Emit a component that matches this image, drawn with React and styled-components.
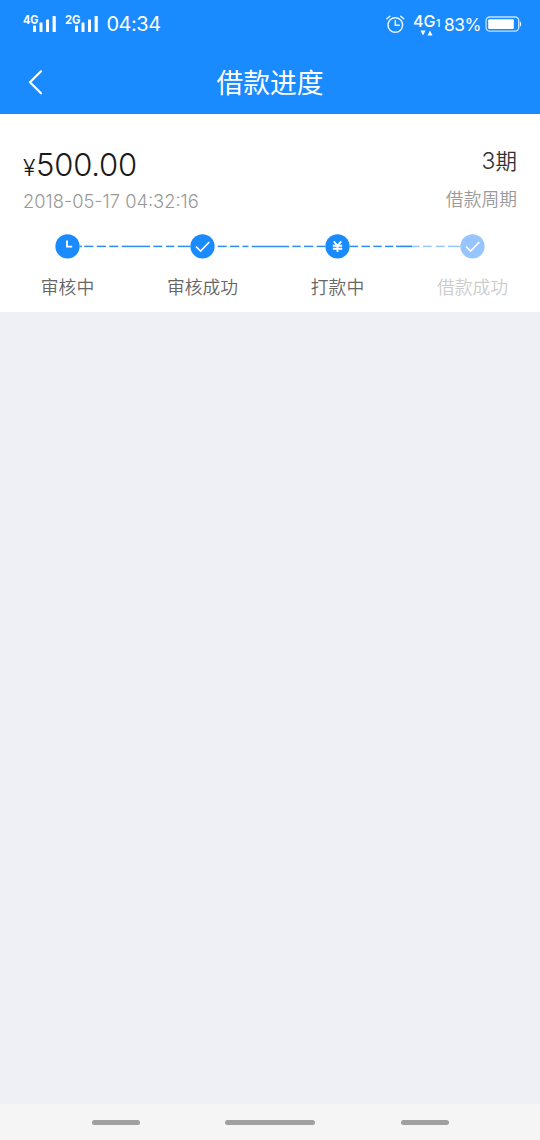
import styled, { createGlobalStyle } from "styled-components"

const GlobalStyle = createGlobalStyle`
* {
    box-sizing: border-box;
}

body {
    margin: 0;
    background-color: #eef0f5;
    font-family: Inter, "Noto Sans CJK SC", sans-serif;
}
`

const steps = [
    { label: "审核中", icon: "clock" },
    { label: "审核成功", icon: "check" },
    { label: "打款中", icon: "yen" },
    { label: "借款成功", icon: "check", pending: true },
]

// start and end of every dash between two steps
const lines = [
    [[0, 2.5], [4.8, 13.8], [17.2, 26.5], [29.8, 38.8], [42.2, 70.5], [73.8, 82.8], [86.5, 94.8], [98.2, 111]],
    [[3.2, 12.2], [15.5, 24.8], [28, 34], [37.2, 74.5], [77.8, 86.2], [89.5, 98.8], [102.2, 111]],
    [[0, 8.5], [12, 20.5], [23.8, 32.2], [35.5, 43.8], [46.5, 62.5]],
]
const pendingDashes = [[50.5, 70], [73.5, 82.2], [86.5, 95.2], [98.5, 111]]

function Signal({ network }) {
    return (
        <svg width="34" height="22" viewBox="0 -1 34 22" fill="#fff">
            <text x="0" y="9.8" fontSize="12" fontWeight="700" textLength="15.5" lengthAdjust="spacingAndGlyphs">{network}</text>
            <rect x="10" y="11.5" width="3" height="6.5" rx="0.6" />
            <rect x="16.5" y="8.5" width="3" height="9.5" rx="0.6" />
            <rect x="23" y="5.5" width="3" height="12.5" rx="0.6" />
            <rect x="29.6" y="2" width="3.2" height="16" rx="0.6" />
        </svg>
    )
}

function Alarm() {
    return (
        <svg width="20" height="20" viewBox="0 0 20 20" fill="none" stroke="#fff" strokeOpacity="0.9" strokeWidth="1.5" strokeLinecap="round">
            <circle cx="10.3" cy="11" r="7.3" />
            <path d="M10.3 6.8v4.5h4M1.9 4.7l2.9-2.5M18.7 4.7l-2.9-2.5" />
        </svg>
    )
}

function Battery() {
    return (
        <svg width="38" height="18" viewBox="0 0 38 18" fill="none">
            <rect x="1.1" y="2" width="32.6" height="14.2" rx="3.6" stroke="#fff" strokeOpacity="0.75" strokeWidth="1.3" />
            <rect x="3.2" y="4.2" width="25.6" height="9.8" rx="1" fill="#fff" />
            <path d="M34.8 6.5c1.8.4 1.8 4.8 0 5.2z" fill="#fff" />
        </svg>
    )
}

function StepIcon({ type, pending }) {
    return (
        <Dot viewBox="-0.5 -0.4 24 24">
            <circle cx="12" cy="12" r="12.1" fill={pending ? "#96c5ff" : "#1a8aff"} />
            {type === "clock" && <path d="M11.5 6v6.3h5.2" strokeWidth="1.8" />}
            {type === "check" && <path d="M5.5 12.3l4.6 4.4 8.7-9.1" strokeWidth="1.6" />}
            {type === "yen" && <path d="M8.3 7l3.7 4.4L15.7 7M7.3 11.4h9.4M7.3 14.3h9.4M12 11.2v6.3" strokeWidth="1.9" />}
        </Dot>
    )
}

function Connector({ dashes, faded }) {
    return (
        <Line viewBox="-0.5 -0.4 111 24">
            {faded && faded.map(([from, to]) => (
                <path key={from} d={`M${from} 12H${to}`} stroke="#96c5ff" />
            ))}
            {dashes.map(([from, to]) => (
                <path key={from} d={`M${from} 12H${to}`} stroke="#2f8df0" />
            ))}
        </Line>
    )
}

export default function App() {
    return (
        <Screen>
            <GlobalStyle />
            <Header>
                <StatusBar>
                    <Signals>
                        <Signal network="4G" />
                        <Signal network="2G" />
                    </Signals>
                    <Time>04:34</Time>
                    <Alarm />
                    <Mobile>
                        <svg width="28" height="26" viewBox="0 0 28 26" fill="#fff">
                            <text x="0" y="14.6" fontSize="16.5" fontWeight="500" textLength="22.5" lengthAdjust="spacingAndGlyphs">4G</text>
                            <text x="23" y="15" fontSize="10.5" fontWeight="500">1</text>
                            <path d="M7.5 18.5h5l-2.5 5zM14.5 23.5h5l-2.5-5z" />
                        </svg>
                    </Mobile>
                    <Percent>83%</Percent>
                    <Battery />
                </StatusBar>
                <TitleBar>
                    <BackButton aria-label="返回">
                        <svg width="16" height="26" viewBox="0 0 16 26" fill="none" stroke="#fff" strokeWidth="2.2" strokeLinecap="round" strokeLinejoin="round">
                            <path d="M14 2.3L3 13.3l11 11" />
                        </svg>
                    </BackButton>
                    <Title>借款进度</Title>
                </TitleBar>
            </Header>
            <Card>
                <Summary>
                    <div>
                        <Amount><Currency>¥</Currency>500.00</Amount>
                        <DateText>2018-05-17 04:32:16</DateText>
                    </div>
                    <Period>
                        <Count><span>3</span>期</Count>
                        <PeriodLabel>借款周期</PeriodLabel>
                    </Period>
                </Summary>
                <Track>
                    {steps.map((step, index) => (
                        <TrackItem key={step.label}>
                            {lines[index] && <Connector dashes={lines[index]} faded={index === 2 ? pendingDashes : null} />}
                            <StepIcon type={step.icon} pending={step.pending} />
                        </TrackItem>
                    ))}
                </Track>
                <Labels>
                    {steps.map((step) => (
                        <Label key={step.label} $pending={step.pending}>{step.label}</Label>
                    ))}
                </Labels>
            </Card>
            <NavBar>
                <NavKey $width="48px" />
                <NavKey $width="90px" />
                <NavKey $width="48px" />
            </NavBar>
        </Screen>
    )
}

const Screen = styled.div`
display: flex;
flex-direction: column;
width: 540px;
height: 1140px;
overflow: hidden;
background-color: #eef0f5;
`

const Header = styled.header`
height: 114px;
background-color: #1a8aff;
color: #fff;
`

const StatusBar = styled.div`
display: flex;
align-items: center;
height: 50px;
padding: 0 17px 3px 23px;

svg {
    display: block;
    flex-shrink: 0;
}
`

const Signals = styled.div`
display: flex;
gap: 8px;
`

const Time = styled.div`
flex: 1;
padding: 1px 0 0 7.5px;
font-size: 20px;
letter-spacing: -0.5px;
line-height: 24px;
`

const Mobile = styled.div`
margin: 3px 3px 0 8px;
`

const Percent = styled.div`
width: 41px;
padding-top: 3px;
font-size: 17.3px;
letter-spacing: -0.4px;
line-height: 22px;
`

const TitleBar = styled.div`
display: grid;
grid-template-columns: 60px 1fr 60px;
align-items: center;
height: 64px;
`

const BackButton = styled.button`
display: flex;
padding: 0 0 0 27px;
border: 0;
background: none;
`

const Title = styled.h1`
margin: 0;
padding-top: 2px;
font-size: 26.8px;
font-weight: 400;
line-height: 40px;
text-align: center;
`

const Card = styled.section`
height: 198px;
padding-top: 30px;
background-color: #fff;
`

const Summary = styled.div`
display: flex;
justify-content: space-between;
height: 90px;
padding: 0 23px;
`

const Amount = styled.div`
padding-top: 1px;
color: #1a1a1a;
font-size: 31px;
font-weight: 300;
letter-spacing: -0.2px;
line-height: 40px;
`

const Currency = styled.span`
margin-right: 0.8px;
font-size: 23px;
font-weight: 350;
`

const DateText = styled.div`
margin-top: 1px;
color: #999;
font-size: 18.3px;
font-weight: 300;
line-height: 24px;
`

const Period = styled.div`
text-align: right;
`

const Count = styled.div`
color: #333;
font-size: 21.5px;
font-weight: 350;
line-height: 34px;

span {
    font-size: 23px;
    font-weight: 300;
}
`

const PeriodLabel = styled.div`
margin-top: 9px;
color: #999;
font-size: 17.8px;
font-weight: 350;
line-height: 26px;
`

const Track = styled.div`
display: flex;
padding-left: 55px;
`

// the connector trails its own step, so the pair is laid out in reverse
const TrackItem = styled.div`
display: flex;
flex-direction: row-reverse;
`

const Dot = styled.svg`
width: 24px;
height: 24px;
overflow: visible;
fill: none;

path {
    stroke: #fff;
}
`

const Line = styled.svg`
width: 111px;
height: 24px;
overflow: visible;
fill: none;
stroke-width: 1.5px;
`

const Labels = styled.div`
display: grid;
grid-template-columns: repeat(4, 1fr);
margin-top: 17px;
`

const Label = styled.div`
color: ${({ $pending }) => ($pending ? "#ccc" : "#666")};
font-size: 17.8px;
font-weight: 350;
line-height: 26px;
text-align: center;
`

const NavBar = styled.nav`
display: flex;
justify-content: center;
align-items: center;
gap: 85.5px;
height: 36px;
margin-top: auto;
padding-top: 1px;
background-color: #f5f5f5;
`

const NavKey = styled.span`
width: ${({ $width }) => $width};
height: 5px;
border-radius: 3px;
background-color: #a0a0a0;
`
